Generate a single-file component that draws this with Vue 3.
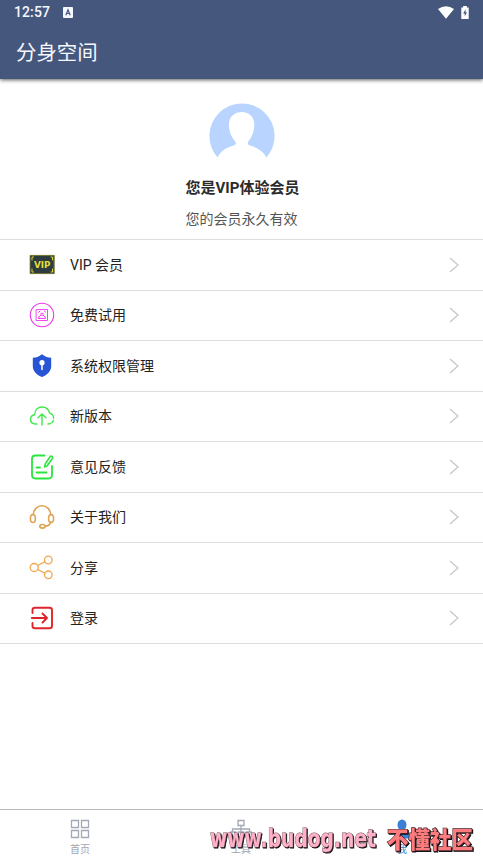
<script setup>
const items = [
  { icon: 'vip', label: 'VIP 会员' },
  { icon: 'trial', label: '免费试用' },
  { icon: 'shield', label: '系统权限管理' },
  { icon: 'cloud', label: '新版本' },
  { icon: 'feedback', label: '意见反馈' },
  { icon: 'headset', label: '关于我们' },
  { icon: 'share', label: '分享' },
  { icon: 'login', label: '登录' }
]
</script>

<template>
  <div class="screen">
    <header class="top">
      <div class="status">
        <span class="time">12:57</span>
        <svg class="badge" width="10" height="11" viewBox="0 0 10 11"><rect width="10" height="11" rx="1" fill="#f5f8ff"/><path d="M2.8 8.3 5 2.8 7.2 8.3M3.6 6.5h2.8" fill="none" stroke="#45577d" stroke-width="1.2"/></svg>
        <span class="grow"></span>
        <svg width="16" height="13" viewBox="0 0 16 13"><path d="M0 3Q8-2.4 16 3L8 12.8Z" fill="#fff"/></svg>
        <svg class="battery" width="8" height="13" viewBox="0 0 8 14"><path d="M2 0h4v1.5h2V14H0V1.5h2Z" fill="#fff"/><path d="M4.6 3.5 2 8h1.7v3L6.2 7H4.6Z" fill="#45577d"/></svg>
      </div>
      <h1>分身空间</h1>
    </header>

    <section class="profile">
      <svg width="66" height="66" viewBox="0 0 66 66">
        <path d="M8.500 54.500A32.600 32.600 0 1 1 57.500 54.500C53.500 47 46.500 44 40 42.300Q38 41 39.300 38.500C44 33 45.700 26 45.200 20C44.400 12.500 39 9 32.700 9C26 9 20.700 13 20 20C19.500 27 22 34 26.300 38.500Q27.500 41 25.500 42.300C18.500 44 12 47.500 8.500 54.500Z" fill="#b9d5ff"/>
      </svg>
      <div class="member">您是VIP体验会员</div>
      <div class="validity">您的会员永久有效</div>
    </section>

    <main class="list">
      <div v-for="item in items" :key="item.icon" class="row">
        <svg class="icon" width="26" height="26" viewBox="0 0 26 26" fill="none" stroke-linecap="round" stroke-linejoin="round">
          <template v-if="item.icon === 'vip'">
            <rect x="1" y="3" width="24.500" height="19" fill="#2e3b3f"/>
            <path d="M4.500 5H3v3M22 5h1.500v3M4.500 20H3v-3M22 20h1.500v-3" stroke="#d9d42c" stroke-width="1"/>
            <rect x="1.400" y="3.400" width="23.600" height="18.200" stroke="#8b8b32" stroke-width=".8"/>
            <text x="5" y="15.700" class="vip-text" textLength="16.500" lengthAdjust="spacingAndGlyphs">VIP</text>
          </template>
          <g v-else-if="item.icon === 'trial'" stroke="#ef35ee">
            <circle cx="13" cy="13" r="11.700" stroke-width="1.100"/>
            <rect x="7.500" y="7.500" width="11" height="11" stroke-width=".9"/>
            <path d="M9.500 10.200 11 9.200M15.300 9l1.200 1M9.500 16c1-4 6-4 7 0ZM11.500 12l1.500-1 1.500 1" stroke-width="1"/>
          </g>
          <g v-else-if="item.icon === 'shield'">
            <path d="M13 1.200C10 3.700 7 4.500 3.800 4.800v8.200c0 5.200 4 9.200 9.200 11 5.200-1.800 9.200-5.800 9.200-11V4.800C19 4.500 16 3.700 13 1.200Z" fill="#2855d5"/>
            <circle cx="13" cy="9.700" r="2.600" fill="#fff"/><path d="M13 11v5.500" stroke="#fff" stroke-width="1.500"/>
          </g>
          <g v-else-if="item.icon === 'cloud'" stroke="#42e64e" stroke-width="1.400">
            <path d="M8 21H6.500C3.500 21 1.500 19 1.500 16.300c0-2.500 2-4.300 4.200-4.600C5.800 6.800 9 4 13 4c4 0 6.800 2.400 7.600 6.200 2.500.7 4 2.700 4 5"/>
            <path d="M24.200 17.500C23.500 20 21.500 21 18 21" stroke-dasharray="2.500 1.800"/>
            <path d="M13 22V11M9 14.700 13 11l4 3.700"/>
          </g>
          <g v-else-if="item.icon === 'feedback'" stroke="#28e53b" stroke-width="1.800">
            <path d="M15.500 1.500H6.500Q3 1.500 3 5v16q0 3.500 3.500 3.500h13q3.500 0 3.500-3.500V12M7.500 13.500h3.500M7.500 18.500h10"/>
            <path d="m15.500 13 .7-3 5-7.500q1-1.200 2 .2t0 2L18 12Z" stroke-width="1.500"/>
          </g>
          <g v-else-if="item.icon === 'headset'" stroke="#dda456" stroke-width="1.600">
            <path d="M4.200 11C4.500 5.500 8 1.800 13 1.800S21.500 5.500 21.800 11M21.700 18c-.7 3-2.500 4-5.500 4.300"/>
            <ellipse cx="3.900" cy="14.500" rx="2.500" ry="4"/><ellipse cx="22.100" cy="14.500" rx="2.500" ry="4"/><ellipse cx="13.500" cy="22.300" rx="2.700" ry="1.800"/>
          </g>
          <g v-else-if="item.icon === 'share'" stroke="#f0a64f" stroke-width="1.300">
            <circle cx="5.200" cy="12.500" r="4"/><circle cx="19.300" cy="5" r="3.800"/><circle cx="19.300" cy="19.800" r="3.800"/>
            <path d="m8.800 10.500 7-3.800M8.700 14.500l7.300 3.600"/>
          </g>
          <g v-else stroke="#e0242b" stroke-width="1.900">
            <path d="M3.500 8V5Q3.500 2.700 6 2.700h14.500Q23 2.700 23 5v16q0 2.300-2.500 2.300H6Q3.500 23.300 3.500 21v-3M2.800 13H18M13.500 8.500 18 13l-4.500 4.500"/>
          </g>
        </svg>
        <span class="label">{{ item.label }}</span>
        <svg class="chevron" width="10" height="16" viewBox="0 0 10 16"><path d="m1 1 8 7-8 7" fill="none" stroke="#c9c9c9" stroke-width="1.400"/></svg>
      </div>
    </main>

    <nav class="tabs">
      <div class="tab">
        <svg width="20" height="20" viewBox="0 0 20 20" fill="none" stroke="#a2a8b5" stroke-width="1.300"><path d="M1.500 1.500h7v7h-7ZM11.500 1.500h7v7h-7ZM1.500 11.500h7v7h-7ZM11.500 11.500h7v7h-7Z"/></svg>
        <span>首页</span>
      </div>
      <div class="tab">
        <svg width="22" height="20" viewBox="0 0 22 20" fill="none" stroke="#a2a8b5" stroke-width="1.300"><path d="M8 1.500h6v5H8ZM11 6.500v6M2.500 13v-3h17v3M.7 13h5v5h-5ZM8.500 13h5v5h-5ZM16.300 13h5v5h-5Z"/></svg>
        <span>工具</span>
      </div>
      <div class="tab active">
        <svg width="20" height="20" viewBox="0 0 20 20" fill="#3b80d5"><ellipse cx="10" cy="6" rx="4.500" ry="5.500"/><path d="M8 10h4v3l5 2.500v4H3v-4L8 13Z"/></svg>
        <span>我</span>
      </div>
    </nav>

    <svg class="watermark" width="275" height="38" viewBox="0 0 275 38">
      <text class="latin" x="3" y="25" textLength="166" lengthAdjust="spacingAndGlyphs">www.budog.net</text>
      <text class="hanzi" x="180" y="26" textLength="86" lengthAdjust="spacingAndGlyphs">不懂社区</text>
    </svg>
  </div>
</template>

<style>
body { margin: 0; background: #fff; }
</style>

<style scoped>
.screen { position: relative; width: 483px; height: 860px; overflow: hidden; display: flex; flex-direction: column; background: #fff; color: #222; font-family: Roboto, "Noto Sans CJK SC", sans-serif; }
.top { height: 79px; flex: none; background: #45577d; color: #f5f8ff; box-shadow: 0 1px 4px rgba(0, 0, 0, .65); }
.status { height: 24px; padding: 0 14px; display: flex; align-items: center; box-sizing: border-box; }
.time { width: 36px; font-size: 14px; font-weight: 500; letter-spacing: .1px; }
.badge { margin-left: 13px; }
.grow { flex: 1; }
.battery { margin: 0 0 0 7px; }
h1 { margin: 14px 0 0 16px; font-size: 20.400px; line-height: 30px; font-weight: 400; }
.profile { height: 160px; flex: none; box-sizing: border-box; padding-top: 24px; display: flex; flex-direction: column; align-items: center; }
.profile svg { flex: none; }
.member { margin-top: 9px; height: 20px; line-height: 20px; font-size: 15px; font-weight: 700; color: #2b2b2b; padding-left: 2px; }
.validity { margin-top: 11px; line-height: 20px; font-size: 14px; color: #555; }
.list { border-top: 1px solid #dedede; }
.row { box-sizing: border-box; height: 50.500px; display: flex; align-items: center; padding: 0 24px 0 29px; border-bottom: 1px solid #dedede; }
.icon { flex: none; }
.label { flex: 1; margin-left: 15px; font-size: 14px; line-height: 20px; }
.vip-text { font: bold 9px "DejaVu Sans", sans-serif; fill: #e4df38; }
.tabs { margin-top: auto; height: 51px; box-sizing: border-box; border-top: 1px solid #bbb; display: grid; grid-template-columns: repeat(3, 1fr); }
.tab { display: flex; flex-direction: column; align-items: center; padding: 9px 1px 0 0; font-size: 10px; line-height: 14px; color: #a2a6ae; }
.tab span { margin-top: 4px; }
.active { color: #3b80d5; }
.watermark { position: absolute; left: 207px; top: 822px; filter: drop-shadow(1px 1px 0 #151015); }
.latin { font: bold 24.500px "DejaVu Sans", sans-serif; fill: #ffb0c7; stroke: #704e59; stroke-width: 1; paint-order: stroke; }
.hanzi { font: 900 23px "Noto Sans CJK SC", sans-serif; fill: #ff7c7e; stroke: #43252a; stroke-width: 1.300; paint-order: stroke; }
</style>
